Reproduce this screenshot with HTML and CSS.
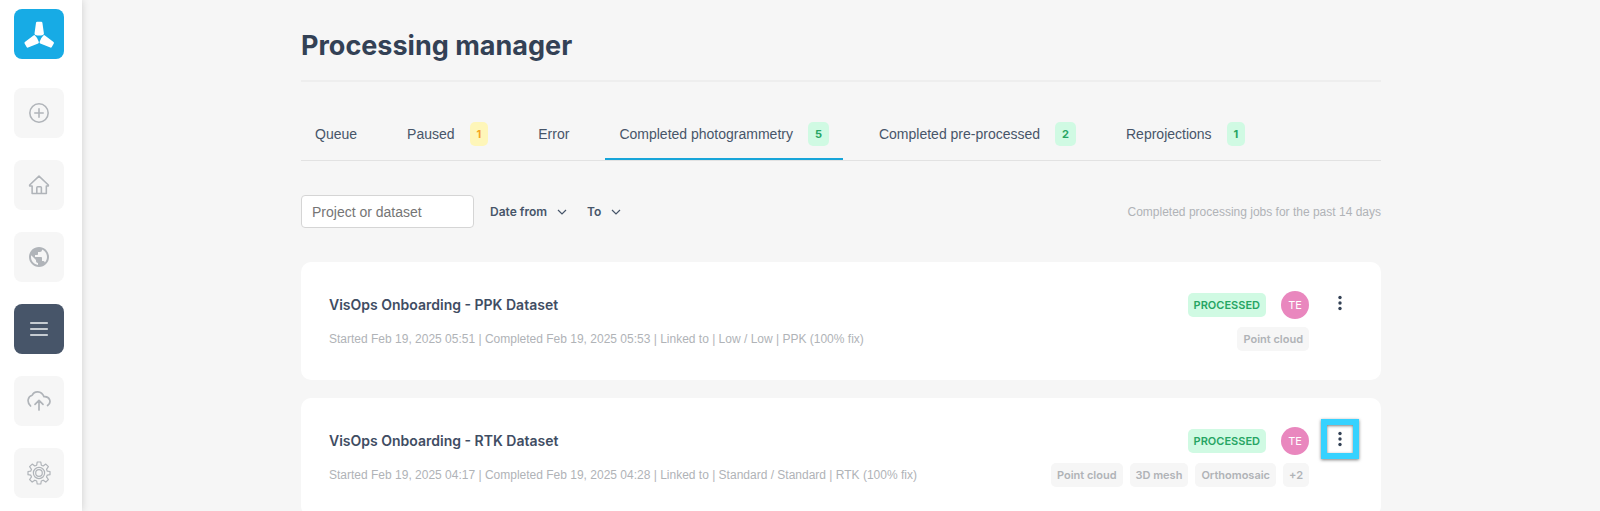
FILE: index.html
```html
<!DOCTYPE html>
<html lang="en">
<head>
<meta charset="utf-8">
<title>Processing manager</title>
<link rel="stylesheet" href="styles.css">
</head>
<body>
<div class="app">
  <nav class="sidebar" aria-label="Main">
    <a class="logo" href="#" aria-label="Dashboard">
      <svg viewBox="0 0 50 50" fill="#fff"><g id="blade"><path d="M23.200 12.800h4q1 0 1.200 1l1.500 10.800q.1 1-.9 1.300-3.800 1.200-7.600 0-1-.3-.9-1.300l1.500-10.800q.2-1 1.200-1z"/></g><use href="#blade" transform="rotate(120 25.200 28.500)"/><use href="#blade" transform="rotate(240 25.200 28.500)"/></svg>
    </a>
    <a class="nav-item" href="#" aria-label="New">
      <svg viewBox="0 0 24 24"><circle cx="12" cy="12" r="10"/><path d="M12 7.400v9.200M7.400 12h9.200"/></svg>
    </a>
    <a class="nav-item" href="#" aria-label="Home">
      <svg viewBox="0 0 24 24"><path d="M1.800 12 12 2.300 22.200 12v1H20v8.300H4.500V13H1.800z"/><path d="M9.600 21v-6q0-1 1-1h3q1 0 1 1v6"/></svg>
    </a>
    <a class="nav-item" href="#" aria-label="Map">
      <svg class="globe" viewBox="0 0 24 24"><path d="M12 2C6.480 2 2 6.480 2 12s4.480 10 10 10 10-4.480 10-10S17.520 2 12 2zm-1 17.930c-3.950-.49-7-3.850-7-7.930 0-.62.080-1.210.21-1.790L9 15v1c0 1.100.9 2 2 2v1.930zm6.900-2.540c-.26-.81-1-1.390-1.900-1.390h-1v-3c0-.55-.45-1-1-1H8v-2h2c.55 0 1-.45 1-1V7h2c1.100 0 2-.9 2-2v-.41c2.930 1.190 5 4.060 5 7.410 0 2.080-.8 3.970-2.100 5.390z"/></svg>
    </a>
    <a class="nav-item active" href="#" aria-label="Processing manager" aria-current="page">
      <svg viewBox="0 0 24 24"><path d="M3 5.500h18M3 12h18M3 18.500h18"/></svg>
    </a>
    <a class="nav-item" href="#" aria-label="Upload">
      <svg class="cloud" viewBox="0 0 24 24"><path d="M3.600 17C-.6 13 .8 7.500 5.200 6.300 7 1.600 14.500 1.200 17 7.700c5.800-.6 8 5.800 3.600 8.800"/><path d="M12 21v-9.500M8 15.300l4-4 4 4"/></svg>
    </a>
    <a class="nav-item" href="#" aria-label="Settings">
      <svg class="gear" viewBox="0 0 24 24"><circle cx="12" cy="12" r="3.300"/><circle cx="12" cy="12" r="5.600"/><path d="M10.200 1h3.600l.5 3.200 1.900.8 2.600-1.900 2.600 2.600L19.500 8.300l.8 1.900 2.700.3v3.200l-2.700.4-.8 1.800 1.900 2.600-2.600 2.600-2.600-1.900-1.900.8-.5 3h-3.600l-.5-3-1.900-.8-2.600 1.900-2.600-2.600 1.900-2.600-.8-1.800L1 13.700v-3.200l2.700-.3.800-1.900-1.900-2.600 2.600-2.600L7.800 5l1.900-.8z"/></svg>
    </a>
  </nav>
  <main class="main">
    <div class="container">
      <h1 class="title">Processing manager</h1>
      <div class="tabs" role="tablist">
        <button class="tab" role="tab">Queue</button>
        <button class="tab" role="tab">Paused <span class="badge warn">1</span></button>
        <button class="tab" role="tab">Error</button>
        <button class="tab selected" role="tab" aria-selected="true">Completed photogrammetry <span class="badge ok">5</span></button>
        <button class="tab" role="tab">Completed pre-processed <span class="badge ok">2</span></button>
        <button class="tab" role="tab">Reprojections <span class="badge ok">1</span></button>
      </div>
      <div class="filters">
        <input class="search" type="text" placeholder="Project or dataset" aria-label="Project or dataset">
        <button class="filter">Date from <svg class="chevron" viewBox="0 0 10 6"><path d="M1 1l4 4 4-4"/></svg></button>
        <button class="filter">To <svg class="chevron" viewBox="0 0 10 6"><path d="M1 1l4 4 4-4"/></svg></button>
        <p class="hint">Completed processing jobs for the past 14 days</p>
      </div>
      <div class="jobs">
        <article class="card">
          <div class="info">
            <h2 class="name">VisOps Onboarding - PPK Dataset</h2>
            <p class="meta">Started Feb 19, 2025 05:51 | Completed Feb 19, 2025 05:53 | Linked to | Low / Low | PPK (100% fix)</p>
          </div>
          <div class="side">
            <div class="status"><span class="processed">PROCESSED</span><span class="avatar">TE</span></div>
            <div class="tags"><span class="tag">Point cloud</span></div>
          </div>
          <button class="more" aria-label="Actions"><svg viewBox="0 0 4 16"><circle cx="2" cy="2.500" r="1.700"/><circle cx="2" cy="8" r="1.700"/><circle cx="2" cy="13.500" r="1.700"/></svg></button>
        </article>
        <article class="card">
          <div class="info">
            <h2 class="name">VisOps Onboarding - RTK Dataset</h2>
            <p class="meta">Started Feb 19, 2025 04:17 | Completed Feb 19, 2025 04:28 | Linked to | Standard / Standard | RTK (100% fix)</p>
          </div>
          <div class="side">
            <div class="status"><span class="processed">PROCESSED</span><span class="avatar">TE</span></div>
            <div class="tags"><span class="tag">Point cloud</span><span class="tag">3D mesh</span><span class="tag">Orthomosaic</span><span class="tag">+2</span></div>
          </div>
          <button class="more highlighted" aria-label="Actions"><svg viewBox="0 0 4 16"><circle cx="2" cy="2.500" r="1.700"/><circle cx="2" cy="8" r="1.700"/><circle cx="2" cy="13.500" r="1.700"/></svg></button>
        </article>
      </div>
    </div>
  </main>
</div>
</body>
</html>
```
FILE: styles.css
```css
* { box-sizing: border-box; margin: 0; }
body {
  background: #f6f6f6;
  color: #475569;
  font-family: Inter, "Liberation Sans", sans-serif;
  font-size: 14px;
}
button { border: 0; background: none; padding: 0; font: inherit; color: inherit; }
.app { display: flex; height: 100vh; overflow: hidden; }

.sidebar {
  flex: none;
  width: 82px;
  padding: 9px 18px 0 14px;
  display: flex;
  flex-direction: column;
  gap: 22px;
  background: #fff;
  box-shadow: 0 0 8px rgba(0, 0, 0, .16);
}
.logo, .nav-item {
  flex: none;
  height: 50px;
  border-radius: 8px;
  display: flex;
  align-items: center;
  justify-content: center;
}
.logo { background: #17abe5; margin-bottom: 7px; }
.logo svg { width: 50px; height: 50px; }
.nav-item { background: #f6f6f6; color: #b0b4b9; }
.nav-item svg {
  width: 22px;
  height: 22px;
  fill: none;
  stroke: currentColor;
  stroke-width: 1.700;
  stroke-linejoin: round;
  stroke-linecap: round;
}
.nav-item .globe { width: 24px; height: 24px; fill: currentColor; stroke: none; }
.nav-item .cloud { width: 24px; height: 24px; }
.nav-item .gear { width: 24px; height: 24px; stroke-width: 1.200; }
.nav-item.active { background: #475569; color: #f1f3f5; }

.main { flex: 1; min-width: 0; }
.container { max-width: 1080px; margin: 0 auto; }
.title {
  padding: 26px 0 14px;
  border-bottom: 2px solid #eee;
  color: #334155;
  font-size: 27px;
  line-height: 40px;
  font-weight: 700;
}
.tabs {
  display: flex;
  gap: 22px;
  margin-top: 28px;
  border-bottom: 1px solid #e2e2e2;
}
.tab {
  display: flex;
  align-items: center;
  gap: 15px;
  height: 50px;
  padding: 0 14px;
  border-bottom: 2px solid transparent;
  font-family: "Liberation Sans", Arial, sans-serif;
  white-space: nowrap;
}
.tab.selected { border-color: #17a5d9; }
.badge {
  padding: 1px 7px 0;
  border-radius: 5px;
  font-family: Inter, sans-serif;
  font-size: 11px;
  line-height: 23px;
  font-weight: 700;
}
.warn { background: #fef6b9; color: #f5a623; }
.ok { background: #d0fae3; color: #27a563; }

.filters { display: flex; align-items: center; margin-top: 34px; }
.search {
  width: 173px;
  height: 33px;
  margin-right: 16px;
  padding: 0 10px;
  border: 1px solid #d5d5d5;
  border-radius: 4px;
  background: #fff;
  font-family: "Liberation Sans", Arial, sans-serif;
  font-size: 14px;
}
.search::placeholder { color: #757575; }
.filter {
  display: flex;
  align-items: center;
  gap: 10px;
  margin-right: 20px;
  font-size: 12px;
  font-weight: 600;
}
.chevron { width: 10px; height: 6px; fill: none; stroke: #475569; stroke-width: 1.200; }
.hint, .meta { font-family: "Liberation Sans", Arial, sans-serif; font-size: 12px; color: #b0b3b7; }
.hint { margin-left: auto; }

.jobs { display: grid; gap: 18px; margin-top: 34px; }
.card {
  display: flex;
  align-items: flex-start;
  min-height: 118px;
  padding: 29px 22px 28px 28px;
  border-radius: 10px;
  background: #fff;
}
.info { flex: 1; min-width: 0; }
.name { color: #3f4d63; font-size: 14px; line-height: 28px; font-weight: 600; }
.meta { margin-top: 10px; line-height: 20px; }
.side { display: grid; gap: 8px; justify-items: end; }
.status { display: flex; align-items: center; gap: 15px; }
.processed {
  padding: 1px 6px 0;
  border-radius: 5px;
  background: #d0fae3;
  color: #27a563;
  font-size: 11px;
  line-height: 23px;
  font-weight: 600;
}
.avatar {
  width: 28px;
  height: 28px;
  border-radius: 50%;
  background: #e987be;
  color: #fff;
  font-size: 11px;
  line-height: 28px;
  text-align: center;
}
.tags { display: flex; gap: 7px; }
.tag {
  padding: 1px 6px 0;
  border-radius: 5px;
  background: #f6f6f6;
  color: #b0b3b7;
  font-size: 11px;
  line-height: 23px;
  font-weight: 600;
}
.more {
  display: flex;
  align-items: center;
  justify-content: center;
  width: 38px;
  height: 40px;
  margin: -8px 0 0 12px;
}
.more svg { width: 4px; height: 16px; fill: #334155; }
.highlighted {
  border: 6px solid #36d2ff;
  box-shadow: 0 1px 3px rgba(0, 0, 0, .5), inset 0 1px 3px rgba(0, 0, 0, .5);
}
```
